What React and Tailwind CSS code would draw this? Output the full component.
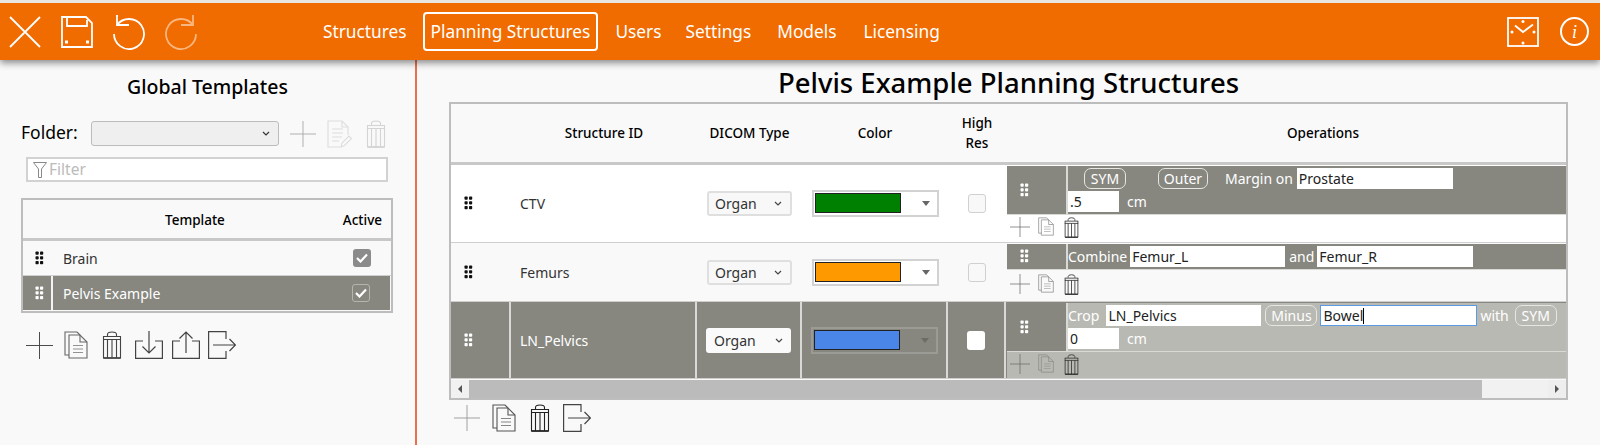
const Dots = ({ className = "" }) => (
  <svg viewBox="0 0 9 14" className={`w-[9px] h-[14px] ${className}`} fill="currentColor">
    <rect x="0.5" y="0.5" width="3.2" height="3.2" rx="0.8" />
    <rect x="5" y="0.5" width="3.2" height="3.2" rx="0.8" />
    <rect x="0.5" y="5.2" width="3.2" height="3.2" rx="0.8" />
    <rect x="5" y="5.2" width="3.2" height="3.2" rx="0.8" />
    <rect x="0.5" y="10" width="3.2" height="3.2" rx="0.8" />
    <rect x="5" y="10" width="3.2" height="3.2" rx="0.8" />
  </svg>
);

const Plus = ({ className = "" }) => (
  <svg viewBox="0 0 28 28" className={className} fill="none" stroke="currentColor" strokeWidth="1">
    <path d="M0 14H28M14 0V28" />
  </svg>
);

const Copy = ({ className = "" }) => (
  <svg viewBox="0 0 24 28" className={className} fill="none" stroke="currentColor" strokeWidth="1.1">
    <path d="M5 4H16L23 11V27H5Z" />
    <path d="M16 4V11H23" />
    <path d="M5 24H1V1H13L16 4" />
    <path d="M9 14.5H19M9 18H19M9 21.5H19" opacity="0.7" />
  </svg>
);

const Trash = ({ className = "" }) => (
  <svg viewBox="0 0 20 28" className={className} fill="none" stroke="currentColor" strokeWidth="1.1">
    <path d="M5.5 5V3.5Q5.5 1 10 1T14.5 3.5V5" />
    <path d="M1 5.5H19M1 8.5H19" />
    <path d="M1.5 5.5V27H18.5V5.5" />
    <path d="M5.5 8.5V27M10 8.5V27M14.5 8.5V27" />
    <path d="M1.5 27H18.5" strokeWidth="1.6" />
  </svg>
);

const Download = ({ className = "" }) => (
  <svg viewBox="0 0 28 28" className={className} fill="none" stroke="currentColor" strokeWidth="1.2">
    <path d="M8 10H0.6V27.4H27.4V10H20" />
    <path d="M14 0V22M7.5 15.5L14 22L20.5 15.5" />
  </svg>
);

const Upload = ({ className = "" }) => (
  <svg viewBox="0 0 28 28" className={className} fill="none" stroke="currentColor" strokeWidth="1.2">
    <path d="M8 10H0.6V27.4H27.4V10H20" />
    <path d="M14 22V1M7.5 7.5L14 1L20.5 7.5" />
  </svg>
);

const Export = ({ className = "" }) => (
  <svg viewBox="0 0 28 28" className={className} fill="none" stroke="currentColor" strokeWidth="1.2">
    <path d="M18 8V0.6H0.6V27.4H18V20" />
    <path d="M5 14H27M21.5 8L27.5 14L21.5 20" />
  </svg>
);

const FileEdit = ({ className = "" }) => (
  <svg viewBox="0 0 25 28" className={className} fill="none" stroke="currentColor" strokeWidth="1.1">
    <path d="M21 15V7L15 1H1V27H13" />
    <path d="M15 1V7H21" />
    <path d="M5 9H16M5 13H16M5 17H15M5 21H12" />
    <path d="M14 27L15 23L22 16L24.5 18.5L17.5 25.5Z" />
  </svg>
);

const Chevron = ({ className = "" }) => (
  <svg viewBox="0 0 8 5" className={`w-[8px] h-[5px] ${className}`} fill="none" stroke="currentColor" strokeWidth="1.2">
    <path d="M1 1L4 4L7 1" />
  </svg>
);

const Check = ({ className = "" }) => (
  <svg viewBox="0 0 12 10" className={`w-[12px] h-[10px] ${className}`} fill="none" stroke="#fff" strokeWidth="2.2">
    <path d="M1 5L4.5 8.5L11 1.5" />
  </svg>
);

function TopBar() {
  return (
    <div className="relative z-10 h-[60px] border-t-[3px] border-[#e9e5e1] bg-[#f16c00] shadow-[0_3px_7px_rgba(0,0,0,0.45)] flex items-center text-white shrink-0">
      <svg viewBox="0 0 32 32" className="w-[32px] h-[32px] ml-[9px]" fill="none" stroke="currentColor" strokeWidth="1.8">
        <path d="M1 1L31 31M31 1L1 31" />
      </svg>
      <svg viewBox="0 0 32 32" className="w-[32px] h-[32px] ml-[20px]" fill="none" stroke="currentColor" strokeWidth="1.8">
        <path d="M1 1H25L31 7V31H1Z" />
        <path d="M6 1V10H26V4" />
        <rect x="4" y="24.5" width="3" height="3" fill="currentColor" stroke="none" />
        <rect x="25" y="24.5" width="3" height="3" fill="currentColor" stroke="none" />
      </svg>
      <svg viewBox="0 0 32 36" className="w-[32px] h-[36px] ml-[20px]" fill="none" stroke="currentColor" strokeWidth="1.8">
        <path d="M4 11A15 15 0 1 1 1 20" />
        <path d="M4 1V11H16" />
      </svg>
      <svg viewBox="0 0 32 36" className="w-[32px] h-[36px] ml-[20px] opacity-50" fill="none" stroke="currentColor" strokeWidth="1.8">
        <path d="M28 11A15 15 0 1 0 31 20" />
        <path d="M28 1V11H16" />
      </svg>

      <nav className="flex items-center text-[17.3px] ml-[126px]">
        <span>Structures</span>
        <span className="ml-[16px] h-[39px] px-[6px] flex items-center border-2 border-white rounded-[4px]">Planning Structures</span>
        <span className="ml-[17px]">Users</span>
        <span className="ml-[24px]">Settings</span>
        <span className="ml-[26px]">Models</span>
        <span className="ml-[27px]">Licensing</span>
      </nav>

      <svg viewBox="0 0 32 30" className="w-[32px] h-[30px] ml-auto" fill="none" stroke="currentColor" strokeWidth="1.8">
        <rect x="1" y="1" width="30" height="28" />
        <path d="M8 8.5L16 15L26 7.5" />
        <circle cx="16" cy="4.5" r="1.5" fill="currentColor" stroke="none" />
        <circle cx="5" cy="15" r="1.5" fill="currentColor" stroke="none" />
        <circle cx="27" cy="15" r="1.5" fill="currentColor" stroke="none" />
        <circle cx="16" cy="26" r="1.5" fill="currentColor" stroke="none" />
      </svg>
      <div className="w-[29px] h-[29px] ml-[21px] mr-[11px] rounded-full border-2 border-white flex items-center justify-center italic text-[18px] leading-none font-['Liberation_Serif',serif]">i</div>
    </div>
  );
}

function TemplateRow({ name, selected }) {
  return (
    <div className={`flex items-center ${selected ? "h-[34px] bg-[#878780] text-white mr-[1px]" : "h-[35px] text-[#333] border-b border-[#cfcfcf]"}`}>
      <div className={`w-[30px] h-full flex items-center justify-start pl-[12px] ${selected ? "border-r-2 border-[#f4f4f4]" : "text-[#111]"}`}>
        <Dots />
      </div>
      <div className="flex-1 pl-[10px] text-[14px]">{name}</div>
      <div className={`w-[18px] h-[18px] mr-[20px] rounded-[3px] flex items-center justify-center ${selected ? "border border-[#b5b5b0]" : "bg-[#8b8b8b]"}`}>
        <Check />
      </div>
    </div>
  );
}

function Sidebar() {
  return (
    <aside className="w-[417px] shrink-0 border-r-2 border-[#e8704e] pt-[14px]">
      <h2 className="text-center text-[19.5px] leading-[26px] font-medium text-black">Global Templates</h2>

      <div className="mt-[21px] ml-[21px] flex items-center h-[25px]">
        <span className="text-[17.5px] text-black w-[70px] pb-[3px]">Folder:</span>
        <div className="w-[188px] h-[25px] bg-[#efefef] border border-[#bcbcbc] rounded-[3px] flex items-center justify-end pr-[8px] text-[#333]">
          <Chevron />
        </div>
        <Plus className="w-[26px] h-[26px] ml-[11px] text-[#aaa]" />
        <FileEdit className="w-[25px] h-[28px] ml-[11px] text-[#ddd]" />
        <Trash className="w-[20px] h-[28px] ml-[14px] text-[#d4d4d4]" />
      </div>

      <div className="mt-[11px] ml-[26px] w-[362px] h-[25px] bg-white border-2 border-[#d2d2d2] flex items-center pl-[5px]">
        <svg viewBox="0 0 14 16" className="w-[14px] h-[16px] text-[#888]" fill="none" stroke="currentColor" strokeWidth="1">
          <path d="M0.5 0.5H13.5L8.5 7V15.5H5.5V7Z" />
        </svg>
        <span className="ml-[2px] text-[15.5px] text-[#bbb]">Filter</span>
      </div>

      <div className="mt-[16px] ml-[21px] w-[372px] h-[115px] border-2 border-[#bdbdbd] bg-[#f9f9f9]">
        <div className="h-[41px] pt-[3px] border-b-[3px] border-[#c8c8c8] flex items-center text-[13.5px] font-medium text-black">
          <span className="ml-[142px]">Template</span>
          <span className="ml-[118px]">Active</span>
        </div>
        <TemplateRow name="Brain" />
        <TemplateRow name="Pelvis Example" selected />
      </div>

      <div className="mt-[18px] ml-[26px] flex items-center text-[#444]">
        <Plus className="w-[27px] h-[27px]" />
        <Copy className="w-[24px] h-[28px] ml-[11px] text-[#666]" />
        <Trash className="w-[20px] h-[28px] ml-[14px]" />
        <Download className="w-[28px] h-[28px] ml-[13px]" />
        <Upload className="w-[28px] h-[28px] ml-[9px]" />
        <Export className="w-[28px] h-[28px] ml-[8px]" />
      </div>
    </aside>
  );
}

const Pill = ({ children, className = "" }) => (
  <span className={`h-[21px] flex items-center justify-center border border-[#e6e6e2] rounded-[7px] text-[14px] ${className}`}>{children}</span>
);

const Field = ({ value, className = "" }) => (
  <input readOnly value={value} className={`h-[21px] bg-white pl-[2px] text-[14px] text-[#222] outline-none ${className}`} />
);

function OpActions({ selected, top }) {
  return (
    <div className={`flex-1 flex items-start pl-[3px] ${top} ${selected ? "bg-[#b9b9b3]" : ""}`}>
      <Plus className="w-[20px] h-[20px] text-[#666]" />
      <Copy className="w-[16px] h-[19px] ml-[8px] text-[#888]" />
      <Trash className="w-[15px] h-[21px] ml-[10px] text-[#333]" />
    </div>
  );
}

function OpBody({ selected, children }) {
  return (
    <div className={`flex items-stretch text-white ${selected ? "bg-[#b9b9b3]" : "bg-[#878780]"} border-b border-[#d9d9d6]`}>
      <div className="w-[61px] shrink-0 pl-[13px] bg-[#878780] flex items-center justify-start border-r-2 border-[#d9d9d6]">
        <Dots />
      </div>
      <div className="flex-1 flex flex-wrap items-center gap-y-[2px] py-[2px] text-[14px]">{children}</div>
    </div>
  );
}

function StructureRow({ id, swatch, selected, height, children }) {
  const sep = selected ? "border-r-2 border-[#d9d9d6]" : "";
  return (
    <div className={`flex border-b border-[#cfcfcf] ${height} ${selected ? "bg-[#878780] text-white" : "text-[#333]"}`}>
      <div className={`w-[60px] pl-[13px] flex items-center justify-start ${sep} ${selected ? "" : "text-[#111]"}`}><Dots /></div>
      <div className={`w-[186px] flex items-center pl-[9px] text-[14px] ${sep}`}>{id}</div>
      <div className={`w-[105px] flex items-center justify-center ${sep}`}>
        <div className={`w-[85px] h-[25px] rounded-[3px] flex items-center justify-between pr-[8px] text-[14px] text-[#333] ${selected ? "pl-[8px] bg-[#fafafa]" : "pl-[6px] bg-[#f8f8f8] border-2 border-[#dfdfdf]"}`}>
          Organ <Chevron className="text-[#444]" />
        </div>
      </div>
      <div className={`w-[146px] flex items-center justify-center ${sep}`}>
        <div className={`w-[127px] h-[27px] border-2 flex items-center pl-[1px] ${selected ? "border-[#9b9b95]" : "border-[#d2d2d2] bg-white"}`}>
          <div className="w-[86px] h-[20px] border border-[#222]" style={{ background: swatch }} />
          <div className={`ml-[21px] w-0 h-0 border-x-[4px] border-x-transparent border-t-[5px] ${selected ? "border-t-[#6c6c66]" : "border-t-[#666]"}`} />
        </div>
      </div>
      <div className={`w-[58px] flex items-center justify-center ${sep}`}>
        <div className={`w-[18px] h-[19px] rounded-[3px] ${selected ? "bg-white" : "bg-[#f8f8f8] border border-[#d0d0d0]"}`} />
      </div>
      <div className="flex-1 pt-[1px] pl-[1px] flex flex-col">{children}</div>
    </div>
  );
}

function PlanningTable() {
  return (
    <div className="mt-[1px] w-[1119px] h-[298px] border-2 border-[#bdbdbd] flex flex-col">
      <div className="h-[61px] border-b-[3px] border-[#c8c8c8] flex items-center text-[13.5px] font-medium text-black text-center">
        <div className="w-[60px]" />
        <div className="w-[186px]">Structure ID</div>
        <div className="w-[105px]">DICOM Type</div>
        <div className="w-[146px]">Color</div>
        <div className="w-[58px] leading-[20px]">High<br />Res</div>
        <div className="flex-1 pl-[74px]">Operations</div>
      </div>

      <div className="bg-white">
        <StructureRow id="CTV" swatch="#008000" height="h-[78px]">
          <OpBody>
            <Pill className="ml-[16px] w-[42px]">SYM</Pill>
            <Pill className="ml-[32px] w-[50px]">Outer</Pill>
            <span className="ml-[17px]">Margin on</span>
            <Field value="Prostate" className="ml-[4px] w-[156px]" />
            <div className="w-full flex items-center">
              <Field value=".5" className="w-[51px]" />
              <span className="ml-[8px]">cm</span>
            </div>
          </OpBody>
          <OpActions top="pt-[2px]" />
        </StructureRow>
      </div>

      <StructureRow id="Femurs" swatch="#ff9900" height="h-[60px]">
        <OpBody>
          <span>Combine</span>
          <Field value="Femur_L" className="ml-[3px] w-[155px]" />
          <span className="ml-[4px]">and</span>
          <Field value="Femur_R" className="ml-[3px] w-[156px]" />
        </OpBody>
        <OpActions top="pt-[4px]" />
      </StructureRow>

      <StructureRow id="LN_Pelvics" swatch="#4a86e8" height="h-[77px]" selected>
        <OpBody selected>
          <span>Crop</span>
          <Field value="LN_Pelvics" className="ml-[7px] w-[155px]" />
          <Pill className="ml-[4px] w-[52px]">Minus</Pill>
          <div className="ml-[3px] w-[157px] h-[21px] bg-white border border-[#5b9be6] flex items-center pl-[2px] text-[14px] text-[#222]">
            Bowel<span className="w-[1px] h-[16px] bg-black" />
          </div>
          <span className="ml-[3px]">with</span>
          <Pill className="ml-[6px] w-[42px]">SYM</Pill>
          <div className="w-full flex items-center">
            <Field value="0" className="w-[51px]" />
            <span className="ml-[8px]">cm</span>
          </div>
        </OpBody>
        <OpActions selected top="pt-[2px]" />
      </StructureRow>

      <div className="h-[18px] mt-[1px] flex bg-[#f1f1f1]">
        <div className="w-[18px] flex items-center justify-center">
          <div className="w-0 h-0 border-y-[4px] border-y-transparent border-r-[4px] border-r-[#555]" />
        </div>
        <div className="w-[1013px] bg-[#bbbbbb]" />
        <div className="ml-auto w-[18px] flex items-center justify-center bg-[#eeeeee]">
          <div className="w-0 h-0 border-y-[4px] border-y-transparent border-l-[4px] border-l-[#555]" />
        </div>
      </div>
    </div>
  );
}

export default function App() {
  return (
    <div className="w-[1600px] h-[445px] overflow-hidden flex flex-col bg-[#f9f9f9] font-['Noto_Sans',sans-serif]">
      <TopBar />
      <div className="flex flex-1">
        <Sidebar />
        <main className="pl-[32px] pt-[5px]">
          <h1 className="w-[1119px] text-center text-[27.5px] leading-[36px] font-medium text-black">Pelvis Example Planning Structures</h1>
          <PlanningTable />
          <div className="mt-[4px] ml-[5px] flex items-center text-[#444]">
            <Plus className="w-[26px] h-[26px] text-[#999]" />
            <Copy className="w-[24px] h-[28px] ml-[12px] text-[#555]" />
            <Trash className="w-[20px] h-[28px] ml-[14px] text-[#222]" />
            <Export className="w-[28px] h-[28px] ml-[13px]" />
          </div>
        </main>
      </div>
    </div>
  );
}
